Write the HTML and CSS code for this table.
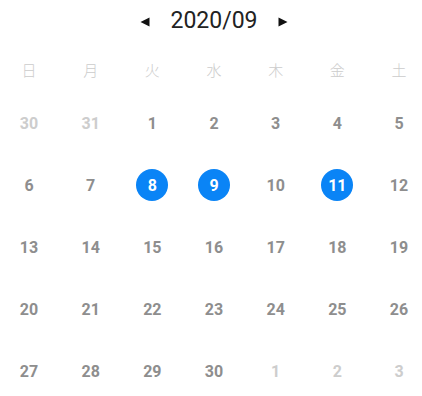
FILE: index.html
```html
<!DOCTYPE html>
<html lang="ja">
<head>
<meta charset="utf-8">
<link rel="stylesheet" href="styles.css">
</head>
<body>
<div class="cal">
  <div class="head">
    <svg class="arrow" width="10" height="10" viewBox="0 0 10 10"><polygon points="9.5,0.5 9.5,9.5 0.5,5" fill="#111"/></svg>
    <span class="title">2020/09</span>
    <svg class="arrow" width="10" height="10" viewBox="0 0 10 10"><polygon points="0.5,0.5 0.5,9.5 9.5,5" fill="#111"/></svg>
  </div>
  <div class="week">
    <span>日</span><span>月</span><span>火</span><span>水</span><span>木</span><span>金</span><span>土</span>
  </div>
  <div class="days">
    <span class="d other">30</span><span class="d other">31</span><span class="d">1</span><span class="d">2</span><span class="d">3</span><span class="d">4</span><span class="d">5</span>
    <span class="d">6</span><span class="d">7</span><span class="d sel">8</span><span class="d sel">9</span><span class="d">10</span><span class="d sel">11</span><span class="d">12</span>
    <span class="d">13</span><span class="d">14</span><span class="d">15</span><span class="d">16</span><span class="d">17</span><span class="d">18</span><span class="d">19</span>
    <span class="d">20</span><span class="d">21</span><span class="d">22</span><span class="d">23</span><span class="d">24</span><span class="d">25</span><span class="d">26</span>
    <span class="d">27</span><span class="d">28</span><span class="d">29</span><span class="d">30</span><span class="d other">1</span><span class="d other">2</span><span class="d other">3</span>
  </div>
</div>
</body>
</html>
```
FILE: styles.css
```css
html, body {
  margin: 0;
  padding: 0;
  background: #fff;
  overflow: hidden;
}
body {
  font-family: Roboto, "Noto Sans CJK JP", sans-serif;
}
.cal {
  width: 431.67px;
  margin-left: -1.83px;
}
.head {
  height: 42px;
  display: flex;
  align-items: center;
  justify-content: center;
  gap: 20px;
}
.title {
  font-size: 23px;
  color: #222;
  line-height: 42px;
}
.arrow {
  display: block;
  margin-top: 1px;
}
.week {
  margin-top: 4px;
  height: 46px;
  display: grid;
  grid-template-columns: repeat(7, 1fr);
  align-items: center;
}
.week span {
  text-align: center;
  font-size: 15px;
  color: #cccccc;
  font-family: "Noto Sans CJK JP", sans-serif;
  font-weight: 300;
}
.days {
  display: grid;
  grid-template-columns: repeat(7, 1fr);
  grid-auto-rows: 62px;
  align-items: center;
  justify-items: center;
}
.d {
  width: 32px;
  height: 32px;
  border-radius: 50%;
  display: flex;
  align-items: center;
  justify-content: center;
  font-size: 16px;
  font-weight: 700;
  color: #8e8e8e;
}
.d.other {
  color: #cdcdcd;
}
.d.sel {
  background: #0a84f6;
  color: #fff;
  font-weight: 700;
}
```
